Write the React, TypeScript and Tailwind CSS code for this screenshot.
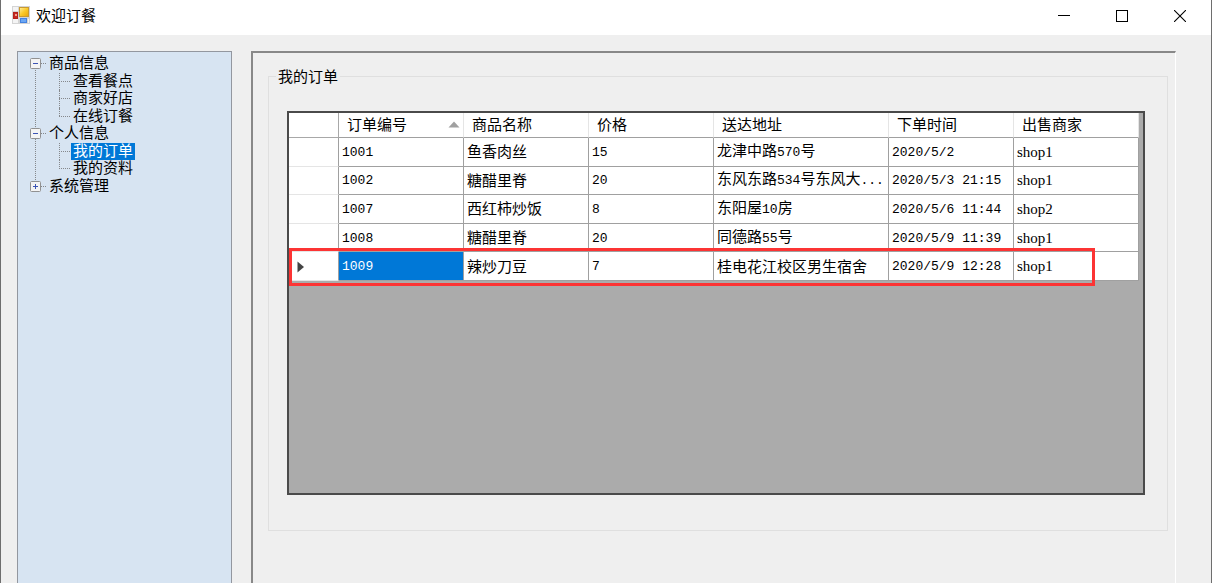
import React, { useState } from "react";

type Column = { key: string; label: string; width: string };
type Order = string[];

const columns: Column[] = [
  { key: "id", label: "订单编号", width: "w-[125px]" },
  { key: "goods", label: "商品名称", width: "w-[125px]" },
  { key: "price", label: "价格", width: "w-[125px]" },
  { key: "address", label: "送达地址", width: "w-[175px]" },
  { key: "time", label: "下单时间", width: "w-[125px]" },
  { key: "shop", label: "出售商家", width: "w-[125px]" },
];

const orders: Order[] = [
  ["1001", "鱼香肉丝", "15", "龙津中路570号", "2020/5/2", "shop1"],
  ["1002", "糖醋里脊", "20", "东风东路534号东风大...", "2020/5/3 21:15", "shop1"],
  ["1007", "西红柿炒饭", "8", "东阳屋10房", "2020/5/6 11:44", "shop2"],
  ["1008", "糖醋里脊", "20", "同德路55号", "2020/5/9 11:39", "shop1"],
  ["1009", "辣炒刀豆", "7", "桂电花江校区男生宿舍", "2020/5/9 12:28", "shop1"],
];

const tree = [
  { label: "商品信息", grow: "flex-4", open: true, children: ["查看餐点", "商家好店", "在线订餐"] },
  { label: "个人信息", grow: "flex-3", open: true, children: ["我的订单", "我的资料"] },
  { label: "系统管理", grow: "flex-1", open: false, children: [] as string[] },
];

/* Digits and punctuation use the monospaced face, Chinese text the sans face. */
function MixedText({ text }: { text: string }) {
  const runs = text.match(/[\x20-\x7e]+|[^\x20-\x7e]+/g) ?? [];
  return (
    <>
      {runs.map((run, i) =>
        /^[\x20-\x7e]/.test(run) ? (
          <span key={i} className="font-['Liberation_Mono',monospace] text-[13px]">{run}</span>
        ) : (
          <span key={i}>{run}</span>
        )
      )}
    </>
  );
}

function AppIcon() {
  return (
    <svg width="18" height="18" viewBox="0 0 18 18" aria-hidden="true">
      <defs>
        <linearGradient id="gold" x1="0" y1="0" x2="1" y2="1">
          <stop offset="0" stopColor="#fff0a0" />
          <stop offset="0.5" stopColor="#fbc928" />
          <stop offset="1" stopColor="#e8a408" />
        </linearGradient>
      </defs>
      <rect x="0" y="0" width="18" height="18" fill="#d4d4d4" />
      <rect x="1" y="1" width="5" height="4" fill="#f4f4f4" />
      <rect x="1" y="13" width="5" height="4" fill="#f4f4f4" />
      <rect x="1.5" y="6.5" width="4" height="6" fill="#c62a22" stroke="#b3221c" />
      <rect x="3" y="8" width="2" height="2" fill="#f0a090" />
      <rect x="7.5" y="1.5" width="9" height="9" fill="url(#gold)" stroke="#c99a30" />
      <rect x="8.5" y="12.5" width="6" height="4" fill="#6aa6f4" stroke="#4482e0" />
      <rect x="16" y="13" width="1" height="4" fill="#f4f4f4" />
    </svg>
  );
}

function TitleBar() {
  const control = "flex h-[31px] w-[58px] items-center justify-center";
  return (
    <header className="flex h-[35px] items-start bg-white">
      <div className="flex h-[30px] flex-1 items-center gap-[6px] pl-[11px]">
        <AppIcon />
        <h1 className="text-[15px] leading-[18px]">欢迎订餐</h1>
      </div>
      <div className="mr-[2px] flex">
        <button className={control} aria-label="最小化">
          <svg width="12" height="12" viewBox="0 0 12 12"><path d="M0 5.5H12" stroke="#000" /></svg>
        </button>
        <button className={control} aria-label="最大化">
          <svg width="12" height="12" viewBox="0 0 12 12"><rect x="0.5" y="0.5" width="11" height="11" fill="none" stroke="#000" /></svg>
        </button>
        <button className={control} aria-label="关闭">
          <svg width="12" height="12" viewBox="0 0 12 12"><path d="M0 0L12 12M12 0L0 12" stroke="#000" strokeWidth="1.1" /></svg>
        </button>
      </div>
    </header>
  );
}

function Expander({ open, label }: { open: boolean; label: string }) {
  return (
    <button className="relative" aria-label={label} aria-expanded={open}>
      <svg className="block" width="11" height="11" viewBox="0 0 11 11">
        <rect x="0.5" y="0.5" width="10" height="10" rx="1" fill="#f4f4f4" stroke="#919191" />
        <path d={open ? "M3 5.5H8" : "M3 5.5H8M5.5 3V8"} stroke="#3c54b4" />
      </svg>
    </button>
  );
}

function Sidebar({ active, onSelect }: { active: string; onSelect: (label: string) => void }) {
  return (
    <nav className="w-[215px] shrink-0 border border-b-0 border-[#93979f] bg-[#d7e4f2] pt-[3px] pl-[12px]">
      <ul className="flex h-[140px] flex-col">
        {tree.map((group) => (
          <li
            key={group.label}
            className={`relative flex flex-col before:absolute before:top-[9px] before:-bottom-[4px] before:left-[5px] before:border-l before:border-dotted before:border-[#85888c] last:before:hidden ${group.grow}`}
          >
            <div className="flex flex-1 items-center">
              <Expander open={group.open} label={group.label} />
              <span className="mr-[3px] w-[5px] border-t border-dotted border-[#85888c]" />
              <button className="pb-[3px] text-[15px] leading-[14px]">{group.label}</button>
            </div>
            {group.children.length > 0 && (
              <ul className="ml-[29px] flex flex-col" style={{ flexGrow: group.children.length, flexBasis: 0 }}>
                {group.children.map((child) => (
                  <li
                    key={child}
                    className="relative flex flex-1 items-center before:absolute before:inset-y-0 before:left-0 before:border-l before:border-dotted before:border-[#85888c] last:before:bottom-[9px]"
                  >
                    <span className="mr-px w-[11px] border-t border-dotted border-[#85888c]" />
                    <button
                      onClick={() => onSelect(child)}
                      className={`px-[2px] pb-[3px] text-[15px] leading-[14px] ${child === active ? "bg-[#0078d7] text-white" : ""}`}
                    >
                      {child}
                    </button>
                  </li>
                ))}
              </ul>
            )}
          </li>
        ))}
      </ul>
    </nav>
  );
}

function OrderTable() {
  return (
    <div className="relative">
      <table className="h-[168px] w-[850px] table-fixed border-separate border-spacing-0 text-left text-[15px] leading-[18px]">
        <thead>
          <tr className="h-[25px] bg-white">
            <th className="w-[50px] border-r border-b border-[#a8a8a8] p-0" aria-label="行" />
            {columns.map((column, i) => (
              <th
                key={column.key}
                className={`border-r border-b border-r-[#e5e5e5] border-b-[#a0a0a0] pt-0 pr-[3px] pb-[2px] pl-[8px] font-normal ${column.width}`}
              >
                <div className="flex items-center justify-between">
                  {column.label}
                  {i === 0 && (
                    <svg width="12" height="7" viewBox="0 0 12 7" aria-hidden="true"><path d="M6 0.5L11.5 6.5H0.5Z" fill="#a0a0a0" /></svg>
                  )}
                </div>
              </th>
            ))}
          </tr>
        </thead>
        <tbody>
          {orders.map((order, row) => {
            const current = row === orders.length - 1;
            return (
              <tr key={order[0]} className="bg-white">
                <td className="border-r border-b border-r-[#a0a0a0] border-b-[#e5e5e5] pt-[2px] pb-0 pl-[8px]">
                  {current && (
                    <svg className="block" width="8" height="12" viewBox="0 0 8 12" aria-label="当前行"><path d="M0.5 0.5L7 6L0.5 11.5Z" fill="#444" /></svg>
                  )}
                </td>
                {order.map((value, i) => (
                  <td
                    key={columns[i].key}
                    className={`border-r border-b border-[#a0a0a0] pt-0 pb-px pl-[3px] whitespace-nowrap ${current && i === 0 ? "bg-[#0078d7] text-white" : ""}`}
                  >
                    {columns[i].key === "shop" ? (
                      <span className="font-['Liberation_Serif',serif]">{value}</span>
                    ) : (
                      <MixedText text={value} />
                    )}
                  </td>
                ))}
              </tr>
            );
          })}
        </tbody>
      </table>
      <div className="pointer-events-none absolute -bottom-[5px] left-0 h-[38px] w-[806px] border-3 border-[#fc3434]" />
    </div>
  );
}

export default function App() {
  const [active, setActive] = useState("我的订单");
  return (
    <div className="bg-white pr-px font-['Noto_Sans_CJK_SC',sans-serif] text-black">
      <div className="flex min-h-screen flex-col border-x border-[#6e6e6e] bg-[#efefef]">
        <TitleBar />
        <div className="flex flex-1 gap-[19px] pt-[16px] pr-[35px] pl-[16px]">
          <Sidebar active={active} onSelect={setActive} />
          <main className="flex-1 border-t-2 border-r border-l-2 border-t-[#888888] border-r-white border-l-[#888888] pt-[13px] pr-[7px] pl-[15px]">
            <fieldset className="border border-[#dfdfdf] pt-[25px] pr-[22px] pb-[35px] pl-[18px]">
              <legend className="-ml-[11px] px-[2px] text-[15px] leading-[20px]">我的订单</legend>
              <div className="h-[384px] border-2 border-[#4a4a4a] bg-[#ababab]">
                <OrderTable />
              </div>
            </fieldset>
          </main>
        </div>
      </div>
    </div>
  );
}
